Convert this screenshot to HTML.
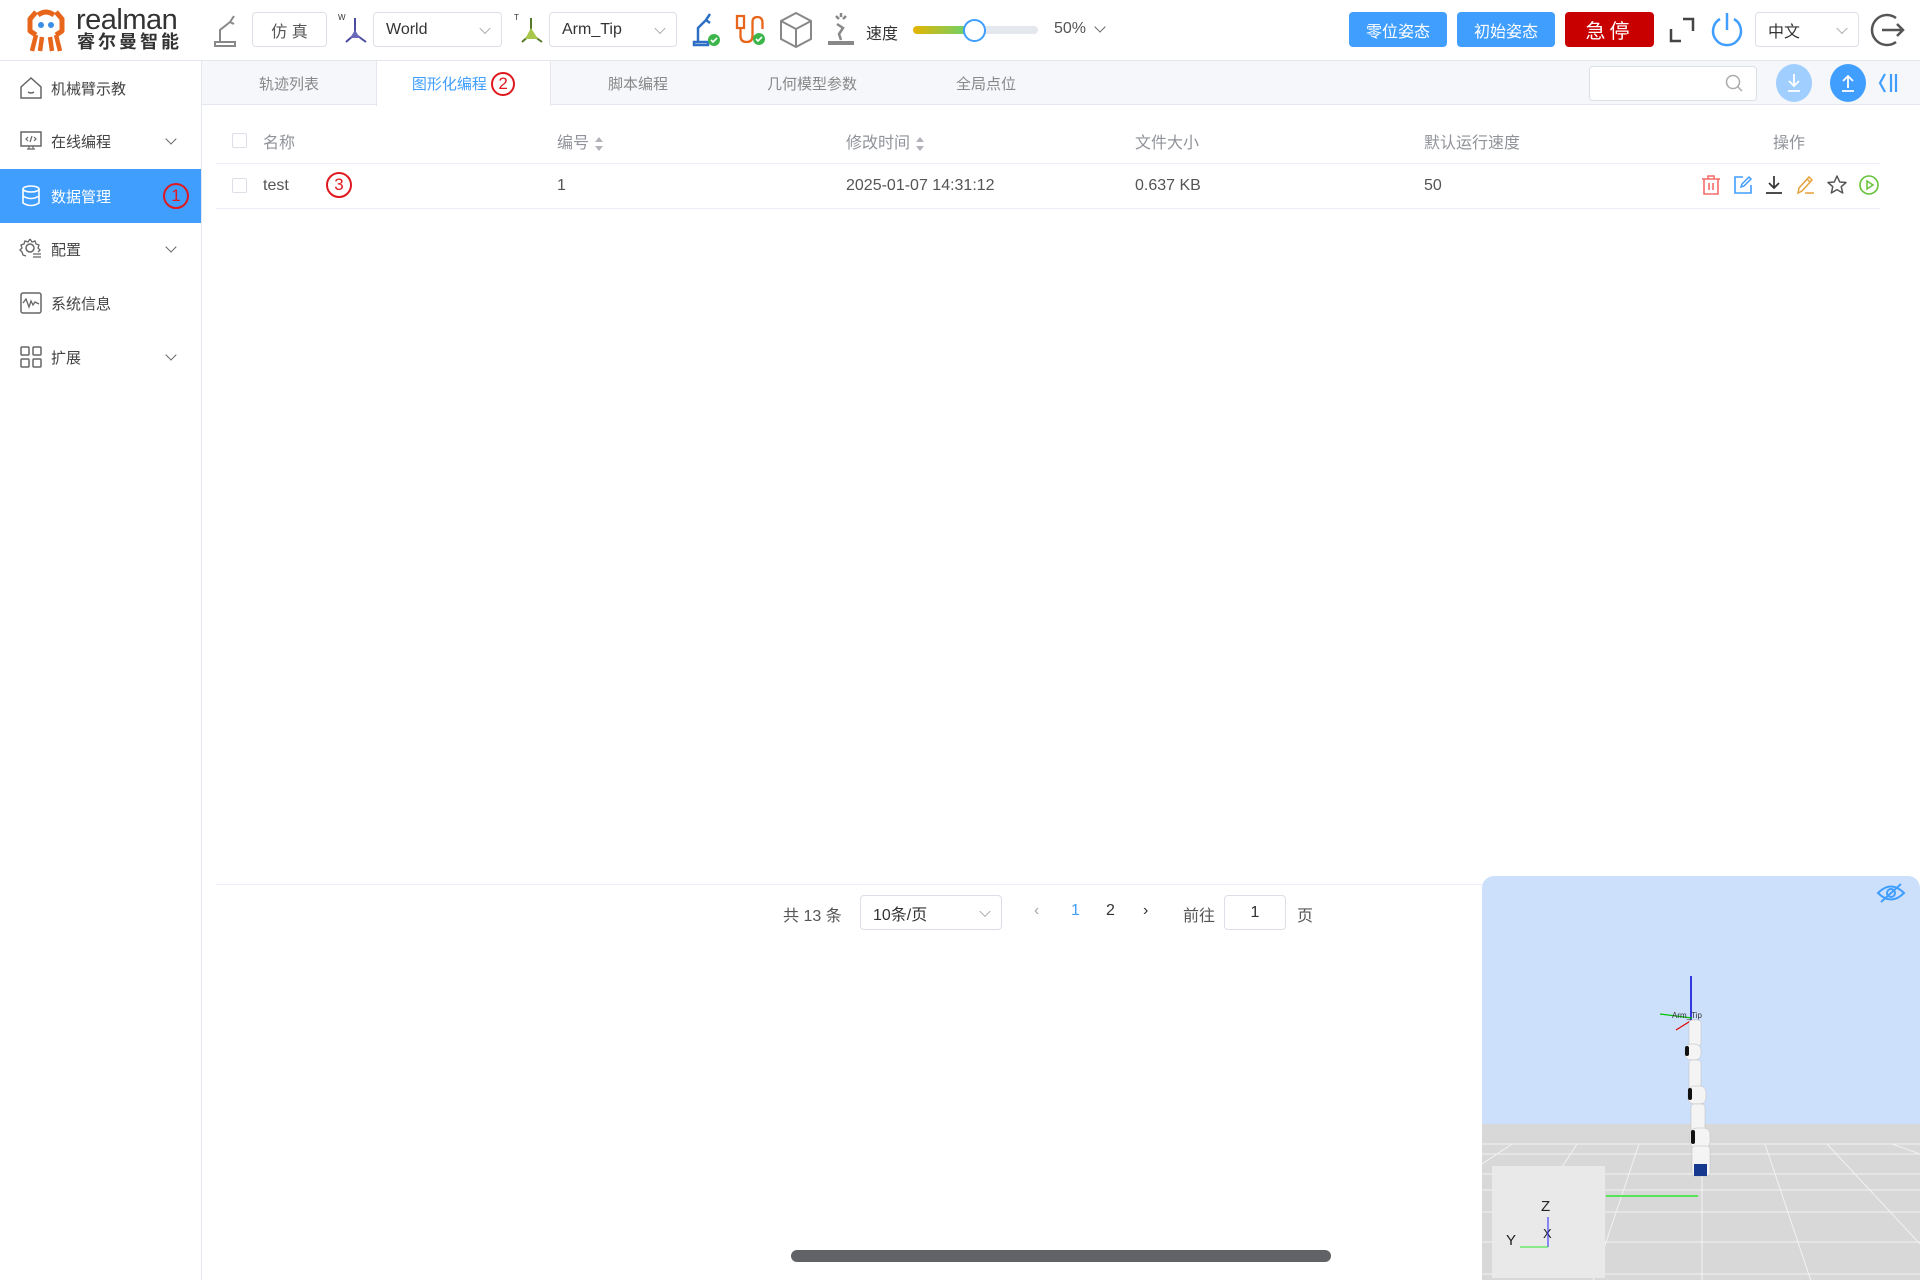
<!DOCTYPE html>
<html><head><meta charset="utf-8">
<style>
*{box-sizing:border-box;margin:0;padding:0}
body{width:1920px;height:1280px;position:relative;overflow:hidden;background:#fff;font-family:"Liberation Sans","Noto Sans CJK SC",sans-serif;color:#606266;font-size:16px}
.a{position:absolute}
.sel{position:absolute;border:1px solid #dcdfe6;border-radius:4px;background:#fff;font-size:16px;color:#333;display:flex;align-items:center;padding-left:12px}
.chev{position:absolute;right:12px;top:50%;width:8px;height:8px;border-right:1.3px solid #aaa;border-bottom:1.3px solid #aaa;transform:translateY(-70%) rotate(45deg)}
.btn{position:absolute;top:12px;height:35px;border-radius:4px;color:#fff;display:flex;align-items:center;justify-content:center;font-size:16px}
.side{position:absolute;left:0;width:201px;height:54px;display:flex;align-items:center;font-size:15px;color:#444}
.side svg{position:absolute;left:19px}
.side span{position:absolute;left:51px}
.side .dc{position:absolute;left:167px;width:8px;height:8px;border-right:1.3px solid #666;border-bottom:1.3px solid #666;transform:rotate(45deg);top:21px}
.tab{position:absolute;top:61px;height:44px;display:flex;align-items:center;justify-content:center;font-size:15px;color:#888}
.th{position:absolute;top:129px;font-size:16px;color:#909399}
.td{position:absolute;top:177px;font-size:16px;color:#555}
.cb{position:absolute;width:15px;height:15px;border:1px solid #dcdfe6;border-radius:2px;background:#fff}
.sort{display:inline-block;vertical-align:middle;margin-left:6px;width:8px;height:14px;position:relative}
.sort:before{content:"";position:absolute;top:0;left:0;border:4px solid transparent;border-bottom:5px solid #b0b3b8;border-top:0}
.sort:after{content:"";position:absolute;bottom:0;left:0;border:4px solid transparent;border-top:5px solid #b0b3b8;border-bottom:0}
.circ{display:inline-flex;align-items:center;justify-content:center;border:2px solid #e0191f;border-radius:50%;color:#e0191f;font-size:17px;width:26px;height:26px}
</style></head><body>
<div class="a" style="left:0;top:0;width:1920px;height:61px;border-bottom:1px solid #e4e7ed"></div>
<svg class="a" style="left:24px;top:9px" width="44" height="44" viewBox="0 0 44 44">
<path d="M12 3 L6 10 L6 22 L12 26 M32 3 L38 10 L38 22 L32 26" stroke="#e8661c" stroke-width="5" fill="none" stroke-linejoin="round"/>
<path d="M14 6 Q22 0 30 6" stroke="#e8661c" stroke-width="5" fill="none"/>
<circle cx="17" cy="16" r="3" fill="#3a8ee6"/><circle cx="27" cy="16" r="3" fill="#3a8ee6"/>
<path d="M12 26 L8 42 M18 28 L16 42 M26 28 L28 42 M32 26 L36 42" stroke="#e8661c" stroke-width="4.5" fill="none"/>
</svg>
<div class="a" style="left:76px;top:5px;font-size:29px;color:#333;letter-spacing:-0.5px;line-height:30px">realman</div>
<div class="a" style="left:77px;top:32px;font-size:18px;font-weight:bold;color:#333;letter-spacing:3px;line-height:20px">睿尔曼智能</div>
<svg class="a" style="left:211px;top:12px" width="30" height="36" viewBox="0 0 30 36"><path d="M4 30 h20 v4 h-20z M9 30 v-12 l10-8 l4 2 M19 10 l4-6" stroke="#888" stroke-width="2" fill="none"/></svg>
<div class="sel" style="left:252px;top:12px;width:75px;height:35px;justify-content:center;padding:0;color:#555">仿 真</div>
<svg class="a" style="left:338px;top:12px" width="34" height="34" viewBox="0 0 34 34"><text x="0" y="8" font-size="8" fill="#333" font-family="Liberation Sans">W</text><path d="M17 6 V22 L8 30 M17 22 L28 30" stroke="#4b4ba0" stroke-width="2" fill="none"/><path d="M12 26 L17 18 L22 26Z" fill="#6a6ab8"/></svg>
<div class="sel" style="left:373px;top:12px;width:129px;height:35px">World<i class="chev"></i></div>
<svg class="a" style="left:514px;top:12px" width="34" height="34" viewBox="0 0 34 34"><text x="0" y="8" font-size="8" fill="#333" font-family="Liberation Sans">T</text><path d="M17 6 V22 L8 30 M17 22 L28 30" stroke="#557a2a" stroke-width="2" fill="none"/><path d="M11 27 L17 16 L24 27Z" fill="#a8c64a"/></svg>
<div class="sel" style="left:549px;top:12px;width:128px;height:35px">Arm_Tip<i class="chev"></i></div>
<svg class="a" style="left:690px;top:10px" width="32" height="38" viewBox="0 0 32 38"><path d="M4 32 h14 v3 h-14z M8 32 v-14 l8-8 l4 3 M16 10 l4-6" stroke="#2d6fc4" stroke-width="2.5" fill="none"/><circle cx="24" cy="30" r="6" fill="#3bb54a"/><path d="M21 30 l2 2 l4-4" stroke="#fff" stroke-width="1.6" fill="none"/></svg>
<svg class="a" style="left:733px;top:12px" width="34" height="36" viewBox="0 0 34 36"><path d="M4 4 h7 v12 h-7z M7.5 16 v8 q0 6 6 6 q6 0 6-6 v-14 q0-5 5-5 q5 0 5 6 v6" stroke="#e8661c" stroke-width="2.3" fill="none"/><circle cx="26" cy="27" r="6" fill="#3bb54a"/><path d="M23 27 l2 2 l4-4" stroke="#fff" stroke-width="1.6" fill="none"/></svg>
<svg class="a" style="left:778px;top:10px" width="36" height="40" viewBox="0 0 36 40"><path d="M18 3 L33 11 V29 L18 37 L3 29 V11Z M3 11 L18 19 L33 11 M18 19 V37" stroke="#888" stroke-width="2" fill="none"/></svg>
<svg class="a" style="left:824px;top:10px" width="34" height="38" viewBox="0 0 34 38"><path d="M17 3 v4 M12 6 l3 3 M22 6 l-3 3 M13 14 l6 4 l-4 6 l2 6" stroke="#888" stroke-width="2.5" fill="none"/><rect x="4" y="31" width="26" height="4" fill="#888"/></svg>
<div class="a" style="left:866px;top:20px;font-size:16px;color:#333">速度</div>
<div class="a" style="left:913px;top:26px;width:125px;height:8px;border-radius:4px;background:#e4e7ed"></div>
<div class="a" style="left:913px;top:26px;width:62px;height:8px;border-radius:4px;background:linear-gradient(90deg,#e6b400,#5ad57a)"></div>
<div class="a" style="left:963px;top:19px;width:23px;height:23px;border-radius:50%;border:2.5px solid #409eff;background:#fff"></div>
<div class="a" style="left:1054px;top:20px;font-size:16px;color:#555">50%</div>
<div class="a" style="left:1096px;top:23px;width:8px;height:8px;border-right:1.3px solid #666;border-bottom:1.3px solid #666;transform:rotate(45deg)"></div>
<div class="btn" style="left:1349px;width:98px;background:#409eff">零位姿态</div>
<div class="btn" style="left:1457px;width:98px;background:#409eff">初始姿态</div>
<div class="btn" style="left:1565px;width:89px;background:#c80000;font-size:20px;letter-spacing:4px">急停</div>
<svg class="a" style="left:1668px;top:15px" width="28" height="30" viewBox="0 0 28 30"><path d="M3 14 V26 H13 M15 4 H25 V16" stroke="#444" stroke-width="2.5" fill="none"/></svg>
<svg class="a" style="left:1709px;top:10px" width="36" height="40" viewBox="0 0 36 40"><path d="M11 9 A14 14 0 1 0 25 9" stroke="#409eff" stroke-width="2.5" fill="none"/><path d="M18 3 V20" stroke="#409eff" stroke-width="2.5"/></svg>
<div class="sel" style="left:1755px;top:12px;width:104px;height:35px">中文<i class="chev"></i></div>
<svg class="a" style="left:1870px;top:11px" width="38" height="38" viewBox="0 0 38 38"><path d="M26 7 A15 15 0 1 0 26 31" stroke="#555" stroke-width="2.5" fill="none"/><path d="M12 19 H33 M27 13 L33 19 L27 25" stroke="#555" stroke-width="2.5" fill="none"/></svg>
<div class="a" style="left:201px;top:61px;width:1px;height:1219px;background:#e4e7ed"></div>
<div class="side" style="top:61px"><svg width="24" height="24" viewBox="0 0 24 24"><path d="M2 11 L12 2 L22 11 V22 H2Z M9 16 q3 2 6 0" stroke="#666" stroke-width="1.5" fill="none"/></svg><span>机械臂示教</span></div>
<div class="side" style="top:114px"><svg width="24" height="24" viewBox="0 0 24 24"><rect x="2" y="3" width="20" height="14" stroke="#666" stroke-width="1.5" fill="none"/><path d="M8 20 h8 M10 17 v3 M14 17 v3 M9 8 l-2 2 l2 2 M15 8 l2 2 l-2 2 M13 7 l-2 6" stroke="#666" stroke-width="1.2" fill="none"/></svg><span>在线编程</span><i class="dc"></i></div>
<div class="side" style="top:169px;background:#409eff;color:#fff"><svg width="24" height="24" viewBox="0 0 24 24"><ellipse cx="12" cy="5" rx="8" ry="3" stroke="#fff" stroke-width="1.6" fill="none"/><path d="M4 5 V19 Q12 24 20 19 V5 M4 12 Q12 17 20 12" stroke="#fff" stroke-width="1.6" fill="none"/></svg><span>数据管理</span><span class="circ" style="left:163px;background:transparent">1</span></div>
<div class="side" style="top:222px"><svg width="24" height="24" viewBox="0 0 24 24"><circle cx="11" cy="11" r="4" stroke="#666" stroke-width="1.5" fill="none"/><path d="M11 2 l2 3 l3-1 l1 3 l3 1 l-1 3 l2 2 l-2 2 M11 2 l-2 3 l-3-1 l-1 3 l-3 1 l1 3 l-2 2 l2 2 l1 3 l3 1 M14 17 h8 M14 20 h8" stroke="#666" stroke-width="1.3" fill="none"/></svg><span>配置</span><i class="dc"></i></div>
<div class="side" style="top:276px"><svg width="24" height="24" viewBox="0 0 24 24"><rect x="2" y="2" width="20" height="20" rx="2" stroke="#666" stroke-width="1.5" fill="none"/><path d="M4 12 l3-4 l3 8 l2-6 l2 4 l2-3 l4 2" stroke="#666" stroke-width="1.3" fill="none"/></svg><span>系统信息</span></div>
<div class="side" style="top:330px"><svg width="24" height="24" viewBox="0 0 24 24"><rect x="2" y="2" width="8" height="8" rx="1" stroke="#666" stroke-width="1.5" fill="none"/><rect x="14" y="2" width="8" height="8" rx="1" stroke="#666" stroke-width="1.5" fill="none"/><rect x="2" y="14" width="8" height="8" rx="1" stroke="#666" stroke-width="1.5" fill="none"/><rect x="14" y="14" width="8" height="8" rx="1" stroke="#666" stroke-width="1.5" fill="none"/></svg><span>扩展</span><i class="dc"></i></div>
<div class="a" style="left:202px;top:61px;width:1718px;height:44px;background:#f5f7fa;border-bottom:1px solid #e4e7ed"></div>
<div class="tab" style="left:202px;width:174px">轨迹列表</div>
<div class="tab" style="left:376px;width:175px;background:#fff;border-left:1px solid #e4e7ed;border-right:1px solid #e4e7ed;color:#409eff;height:45px">图形化编程&nbsp;<span class="circ" style="width:24px;height:24px">2</span></div>
<div class="tab" style="left:551px;width:174px">脚本编程</div>
<div class="tab" style="left:725px;width:174px">几何模型参数</div>
<div class="tab" style="left:899px;width:174px">全局点位</div>
<div class="a" style="left:1589px;top:66px;width:168px;height:35px;border:1px solid #dcdfe6;border-radius:4px;background:#fff"></div>
<svg class="a" style="left:1724px;top:73px" width="20" height="20" viewBox="0 0 20 20"><circle cx="9" cy="9" r="6.5" stroke="#aaa" stroke-width="1.5" fill="none"/><path d="M14 14 l4 4" stroke="#aaa" stroke-width="1.5"/></svg>
<div class="a" style="left:1776px;top:64px;width:36px;height:38px;border-radius:50%;background:#a0cfff"></div>
<svg class="a" style="left:1784px;top:72px" width="20" height="22" viewBox="0 0 20 22"><path d="M10 2 V14 M5 9 L10 14 L15 9 M4 19 H16" stroke="#fff" stroke-width="1.8" fill="none"/></svg>
<div class="a" style="left:1830px;top:64px;width:36px;height:38px;border-radius:50%;background:#409eff"></div>
<svg class="a" style="left:1838px;top:72px" width="20" height="22" viewBox="0 0 20 22"><path d="M10 16 V4 M5 9 L10 4 L15 9 M4 19 H16" stroke="#fff" stroke-width="1.8" fill="none"/></svg>
<svg class="a" style="left:1876px;top:70px" width="26" height="26" viewBox="0 0 26 26"><path d="M9 4 L4 13 L9 22 M15 4 V22 M20 4 V22" stroke="#409eff" stroke-width="2.2" fill="none"/></svg>
<div class="cb" style="left:232px;top:133px"></div>
<div class="th" style="left:263px">名称</div>
<div class="th" style="left:557px">编号<span class="sort"></span></div>
<div class="th" style="left:846px">修改时间<span class="sort"></span></div>
<div class="th" style="left:1135px">文件大小</div>
<div class="th" style="left:1424px">默认运行速度</div>
<div class="th" style="left:1773px">操作</div>
<div class="a" style="left:216px;top:163px;width:1664px;height:1px;background:#ebeef5"></div>
<div class="cb" style="left:232px;top:178px"></div>
<div class="td" style="left:263px">test</div>
<span class="circ a" style="left:326px;top:172px;width:26px;height:26px">3</span>
<div class="td" style="left:557px">1</div>
<div class="td" style="left:846px">2025-01-07 14:31:12</div>
<div class="td" style="left:1135px">0.637 KB</div>
<div class="td" style="left:1424px">50</div>
<div class="a" style="left:216px;top:208px;width:1664px;height:1px;background:#ebeef5"></div>
<svg class="a" style="left:1700px;top:174px" width="22" height="22" viewBox="0 0 22 22"><path d="M2 5 H20 M8 5 V2 H14 V5 M4 5 V20 H18 V5 M9 9 V16 M13 9 V16" stroke="#f56c6c" stroke-width="1.6" fill="none"/></svg>
<svg class="a" style="left:1732px;top:174px" width="22" height="22" viewBox="0 0 22 22"><path d="M11 3 H3 V19 H19 V11" stroke="#409eff" stroke-width="1.6" fill="none"/><path d="M9 13 L10 10 L17 3 L19 5 L12 12Z" stroke="#409eff" stroke-width="1.5" fill="none"/></svg>
<svg class="a" style="left:1763px;top:174px" width="22" height="22" viewBox="0 0 22 22"><path d="M11 2 V14 M6 9 L11 14 L16 9 M3 19 H19" stroke="#333" stroke-width="1.7" fill="none"/></svg>
<svg class="a" style="left:1795px;top:174px" width="22" height="22" viewBox="0 0 22 22"><path d="M3 19 L4 14 L14 3 L17 6 L7 17Z M12 5 L15 8 M10 19 H19" stroke="#e6a23c" stroke-width="1.5" fill="none"/></svg>
<svg class="a" style="left:1826px;top:174px" width="22" height="22" viewBox="0 0 22 22"><path d="M11 2 L13.7 8 L20 8.5 L15.2 12.7 L16.7 19 L11 15.6 L5.3 19 L6.8 12.7 L2 8.5 L8.3 8Z" stroke="#555" stroke-width="1.5" fill="none" stroke-linejoin="round"/></svg>
<svg class="a" style="left:1858px;top:174px" width="22" height="22" viewBox="0 0 22 22"><circle cx="11" cy="11" r="9" stroke="#67c23a" stroke-width="1.6" fill="none"/><path d="M9 7 L15 11 L9 15Z" stroke="#67c23a" stroke-width="1.5" fill="none"/></svg>
<div class="a" style="left:216px;top:884px;width:1664px;height:1px;background:#ebeef5"></div>
<div class="a" style="left:783px;top:902px;font-size:16px;color:#555">共 13 条</div>
<div class="sel" style="left:860px;top:895px;width:142px;height:35px">10条/页<i class="chev"></i></div>
<div class="a" style="left:1034px;top:902px;font-size:16px;color:#aaa">‹</div>
<div class="a" style="left:1071px;top:902px;font-size:16px;color:#409eff">1</div>
<div class="a" style="left:1106px;top:902px;font-size:16px;color:#333">2</div>
<div class="a" style="left:1143px;top:902px;font-size:16px;color:#333">›</div>
<div class="a" style="left:1183px;top:902px;font-size:16px;color:#555">前往</div>
<div class="sel" style="left:1224px;top:895px;width:62px;height:35px;justify-content:center;padding:0">1</div>
<div class="a" style="left:1297px;top:902px;font-size:16px;color:#555">页</div>
<div class="a" style="left:791px;top:1250px;width:540px;height:12px;border-radius:6px;background:#606266"></div>
<div class="a" style="left:1482px;top:876px;width:438px;height:404px;border-radius:12px 12px 0 0;overflow:hidden;background:#cce0fc">
<div class="a" style="left:0;top:248px;width:438px;height:160px;background:#d8d8d8"></div>
<svg class="a" style="left:0;top:248px" width="438" height="160" viewBox="0 0 438 160">
<g stroke="#f2f2f2" stroke-width="1" fill="none">
<path d="M0 20 H438 M0 30 H438 M0 50 H438 M0 66 H438 M0 88 H438 M0 118 H438 M0 150 H438"/>
<path d="M220 0 V160 M157 20 L110 160 M95 20 L10 150 M283 20 L330 160 M345 20 L438 120 M30 20 L0 40 M410 20 L438 30"/>
</g>
<path d="M124 72 H216" stroke="#2ee62e" stroke-width="1.5"/>
</svg>
<div class="a" style="left:10px;top:290px;width:113px;height:112px;background:#e9e9e9"></div>
<div class="a" style="left:59px;top:322px;font-size:15px;color:#222">Z</div>
<div class="a" style="left:24px;top:356px;font-size:15px;color:#222">Y</div>
<div class="a" style="left:61px;top:350px;font-size:13px;color:#222">X</div>
<svg class="a" style="left:30px;top:338px" width="40" height="35"><path d="M36 3 V33" stroke="#2222ff"/><path d="M8 33 H36" stroke="#2ee62e"/></svg>
<svg class="a" style="left:160px;top:90px" width="80" height="240" viewBox="0 0 80 240">
<path d="M49 10 V55" stroke="#0000dd" stroke-width="1.5"/><path d="M18 48 L50 52" stroke="#00c000" stroke-width="1.2"/><path d="M34 64 L50 54" stroke="#e00000" stroke-width="1.2"/>
<text x="30" y="52" font-size="8" fill="#333" font-family="Liberation Sans">Arm_Tip</text>
<g fill="#f4f4f4" stroke="#bbb" stroke-width="0.5">
<rect x="47" y="54" width="12" height="26" rx="3"/><rect x="43" y="78" width="16" height="16" rx="6"/>
<rect x="47" y="94" width="12" height="30" rx="3"/><rect x="46" y="120" width="18" height="18" rx="6"/>
<rect x="49" y="138" width="14" height="28" rx="3"/><rect x="48" y="162" width="20" height="20" rx="6"/>
<rect x="50" y="180" width="18" height="30" rx="3"/></g>
<g fill="#111"><rect x="43" y="80" width="4" height="10" rx="2"/><rect x="46" y="122" width="4" height="12" rx="2"/><rect x="49" y="164" width="4" height="14" rx="2"/></g>
<rect x="52" y="198" width="13" height="12" fill="#16398f"/>
</svg>
<svg class="a" style="left:394px;top:6px" width="30" height="22" viewBox="0 0 30 22"><path d="M2 11 Q15 -2 28 11 Q15 24 2 11Z" stroke="#409eff" stroke-width="2" fill="none"/><circle cx="15" cy="11" r="4" stroke="#409eff" stroke-width="2" fill="none"/><path d="M5 20 L25 2" stroke="#409eff" stroke-width="2"/></svg>
</div>
</body></html>
